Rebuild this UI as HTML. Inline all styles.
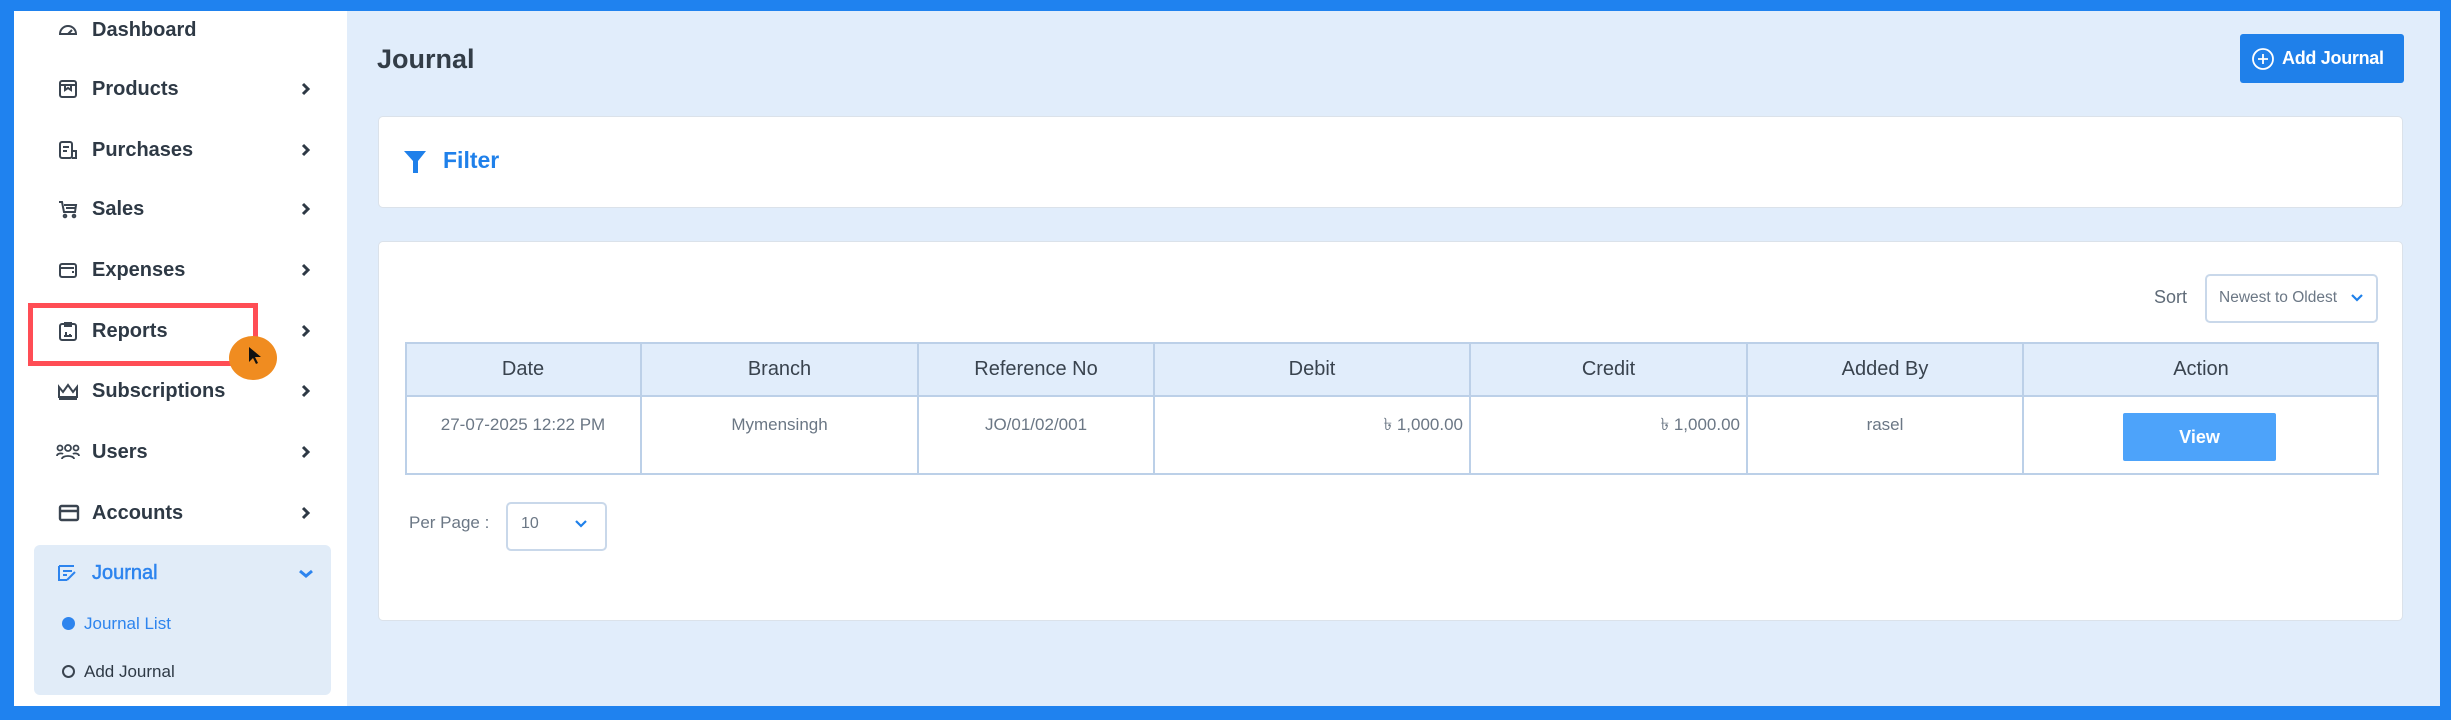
<!DOCTYPE html>
<html><head><meta charset="utf-8"><style>
*{margin:0;padding:0;box-sizing:border-box}
body{width:2451px;height:720px;background:#1f82ef;position:relative;overflow:hidden;font-family:"Liberation Sans",sans-serif}
.abs{position:absolute}
#side{left:14px;top:11px;width:333px;height:695px;background:#fff}
#main{left:347px;top:11px;width:2093px;height:695px;background:#e1edfb}
.item{position:absolute;left:92px;font-size:20px;font-weight:bold;color:#2e3945;line-height:24px}
.ic{position:absolute;left:58px;width:20px;height:20px}
.chev{position:absolute;left:300px;width:12px;height:14px}
.card{position:absolute;background:#fff;border:1px solid #dbe2ea;border-radius:5px}
.th{position:absolute;top:342px;height:55px;line-height:55px;text-align:center;font-size:20px;color:#39434e}
.td{position:absolute;top:413px;font-size:17px;color:#6b7785;line-height:24px}
.vl{position:absolute;top:342px;width:2px;height:133px;background:#bcd0e8}
</style></head><body>
<div id="side" class="abs"></div>
<div id="main" class="abs"></div>

<div class="abs" style="left:34px;top:545px;width:297px;height:150px;background:#e1ecf8;border-radius:6px"></div>

<svg class="ic" style="top:20px" viewBox="0 0 20 20" fill="none" stroke="#3a4450" stroke-width="2"><path d="M2 14a8 8 0 0 1 16 0z"/><path d="M10 14l4-4"/></svg>
<svg class="ic" style="top:79px" viewBox="0 0 20 20" fill="none" stroke="#3a4450" stroke-width="2"><rect x="2" y="2" width="16" height="16" rx="2"/><path d="M2 6h16M7 6v5l3-2 3 2V6"/></svg>
<svg class="ic" style="top:140px" viewBox="0 0 20 20" fill="none" stroke="#3a4450" stroke-width="2"><rect x="2" y="2" width="12" height="16" rx="2"/><path d="M5 7h6M5 11h4M14 11h4v7h-4"/></svg>
<svg class="ic" style="top:199px" viewBox="0 0 20 20" fill="none" stroke="#3a4450" stroke-width="2"><path d="M1 3h3l2 10h11l1-7H6M8 9h9"/><circle cx="7" cy="17" r="1.3"/><circle cx="16" cy="17" r="1.3"/></svg>
<svg class="ic" style="top:260px" viewBox="0 0 20 20" fill="none" stroke="#3a4450" stroke-width="2"><rect x="2" y="4" width="16" height="13" rx="2"/><path d="M2 8h14M14 12h2"/></svg>
<svg class="ic" style="top:321px" viewBox="0 0 20 20" fill="none" stroke="#3a4450" stroke-width="2"><rect x="2" y="3" width="16" height="16" rx="2"/><path d="M7 2h6v3H7zM6 15h8M8 15v-4M12 15v-2"/></svg>
<svg class="ic" style="top:381px" viewBox="0 0 20 20" fill="none" stroke="#3a4450" stroke-width="2"><path d="M1 6l4 5 5-7 5 7 4-5v10H1zM1 18h18"/></svg>
<svg class="ic" style="top:442px;width:24px;left:56px" viewBox="0 0 24 20" fill="none" stroke="#3a4450" stroke-width="1.8"><circle cx="12" cy="6" r="3"/><circle cx="4" cy="6" r="2.5"/><circle cx="20" cy="6" r="2.5"/><path d="M6 17c0-4 12-4 12 0M1 14c0-3 5-3 6-2M23 14c0-3-5-3-6-2"/></svg>
<svg class="ic" style="top:503px;width:22px" viewBox="0 0 22 20" fill="none" stroke="#3a4450" stroke-width="2.4"><rect x="2" y="3" width="18" height="14" rx="1.5"/><path d="M2 8h18"/></svg>
<svg class="ic" style="top:563px;width:22px;left:56px" viewBox="0 0 22 20" fill="none" stroke="#2d84ee" stroke-width="2"><path d="M3 3h15M3 3v14h8M7 8h9M7 12h4M11 17l8-8"/></svg>

<div class="item" style="top:18px">Dashboard</div>
<div class="item" style="top:77px">Products</div>
<div class="item" style="top:138px">Purchases</div>
<div class="item" style="top:197px">Sales</div>
<div class="item" style="top:258px">Expenses</div>
<div class="item" style="top:319px">Reports</div>
<div class="item" style="top:379px">Subscriptions</div>
<div class="item" style="top:440px">Users</div>
<div class="item" style="top:501px">Accounts</div>
<div class="item" style="top:561px;color:#2d84ee;font-weight:normal;-webkit-text-stroke:0.5px #2d84ee">Journal</div>
<div class="abs" style="left:62px;top:617px;width:13px;height:13px;border-radius:50%;background:#2d84ee"></div>
<div class="abs" style="left:84px;top:613px;font-size:17px;color:#2d84ee;line-height:22px">Journal List</div>
<div class="abs" style="left:62px;top:665px;width:13px;height:13px;border-radius:50%;border:2px solid #3a4450"></div>
<div class="abs" style="left:84px;top:661px;font-size:17px;color:#2e3945;line-height:22px">Add Journal</div>

<svg class="chev" style="top:82px" viewBox="0 0 12 14" fill="none" stroke="#2e3945" stroke-width="3"><path d="M3 2l5 5-5 5"/></svg>
<svg class="chev" style="top:143px" viewBox="0 0 12 14" fill="none" stroke="#2e3945" stroke-width="3"><path d="M3 2l5 5-5 5"/></svg>
<svg class="chev" style="top:202px" viewBox="0 0 12 14" fill="none" stroke="#2e3945" stroke-width="3"><path d="M3 2l5 5-5 5"/></svg>
<svg class="chev" style="top:263px" viewBox="0 0 12 14" fill="none" stroke="#2e3945" stroke-width="3"><path d="M3 2l5 5-5 5"/></svg>
<svg class="chev" style="top:324px" viewBox="0 0 12 14" fill="none" stroke="#2e3945" stroke-width="3"><path d="M3 2l5 5-5 5"/></svg>
<svg class="chev" style="top:384px" viewBox="0 0 12 14" fill="none" stroke="#2e3945" stroke-width="3"><path d="M3 2l5 5-5 5"/></svg>
<svg class="chev" style="top:445px" viewBox="0 0 12 14" fill="none" stroke="#2e3945" stroke-width="3"><path d="M3 2l5 5-5 5"/></svg>
<svg class="chev" style="top:506px" viewBox="0 0 12 14" fill="none" stroke="#2e3945" stroke-width="3"><path d="M3 2l5 5-5 5"/></svg>
<svg class="abs" style="left:298px;top:568px;width:16px;height:12px" viewBox="0 0 16 12" fill="none" stroke="#2d84ee" stroke-width="3"><path d="M2 3l6 5 6-5"/></svg>

<div class="abs" style="left:28px;top:303px;width:230px;height:63px;border:5px solid #ff4d55"></div>
<div class="abs" style="left:229px;top:336px;width:48px;height:44px;border-radius:50%;background:#f08c20"></div>
<svg class="abs" style="left:247px;top:346px;width:16px;height:20px" viewBox="0 0 16 20"><path d="M2 1v15l4-4 3 6 2-1-3-6h6z" fill="#111"/></svg>

<div class="abs" style="left:377px;top:44px;font-size:27px;font-weight:bold;color:#333d47">Journal</div>
<div class="abs" style="left:2240px;top:34px;width:164px;height:49px;background:#1f80ea;border-radius:3px;color:#fff;font-size:18px;font-weight:bold;line-height:49px;padding-left:42px;white-space:nowrap;letter-spacing:-0.3px">Add Journal</div>
<svg class="abs" style="left:2251px;top:47px;width:24px;height:24px" viewBox="0 0 24 24" fill="none" stroke="#fff" stroke-width="1.8"><circle cx="12" cy="12" r="10"/><path d="M12 7v10M7 12h10"/></svg>

<div class="card" style="left:378px;top:116px;width:2025px;height:92px"></div>
<svg class="abs" style="left:403px;top:150px;width:24px;height:24px" viewBox="0 0 24 24"><path d="M1 1h22l-8 10v12h-5V11z" fill="#1f80ea"/></svg>
<div class="abs" style="left:443px;top:147px;font-size:23px;font-weight:bold;color:#1f80ea">Filter</div>

<div class="card" style="left:378px;top:241px;width:2025px;height:380px"></div>
<div class="abs" style="left:2154px;top:287px;font-size:18px;color:#5f6b78">Sort</div>
<div class="abs" style="left:2205px;top:274px;width:173px;height:49px;border:2px solid #c9d8ea;border-radius:5px;background:#fff"></div>
<div class="abs" style="left:2219px;top:289px;font-size:15.5px;color:#6b7785">Newest to Oldest</div>
<svg class="abs" style="left:2350px;top:293px;width:14px;height:10px" viewBox="0 0 14 10" fill="none" stroke="#1f80ea" stroke-width="2.2"><path d="M2 2l5 5 5-5"/></svg>

<div class="abs" style="left:405px;top:342px;width:1974px;height:133px;border:2px solid #bcd0e8;background:#fff"></div>
<div class="abs" style="left:407px;top:344px;width:1970px;height:53px;background:#e1edfb;border-bottom:2px solid #bcd0e8"></div>
<div class="vl" style="left:640px"></div>
<div class="vl" style="left:917px"></div>
<div class="vl" style="left:1153px"></div>
<div class="vl" style="left:1469px"></div>
<div class="vl" style="left:1746px"></div>
<div class="vl" style="left:2022px"></div>

<div class="th" style="left:405px;width:236px">Date</div>
<div class="th" style="left:641px;width:277px">Branch</div>
<div class="th" style="left:918px;width:236px">Reference No</div>
<div class="th" style="left:1154px;width:316px">Debit</div>
<div class="th" style="left:1470px;width:277px">Credit</div>
<div class="th" style="left:1747px;width:276px">Added By</div>
<div class="th" style="left:2023px;width:356px">Action</div>

<div class="td" style="left:405px;width:236px;text-align:center">27-07-2025 12:22 PM</div>
<div class="td" style="left:641px;width:277px;text-align:center">Mymensingh</div>
<div class="td" style="left:918px;width:236px;text-align:center">JO/01/02/001</div>
<div class="td" style="left:1154px;width:309px;text-align:right">৳ 1,000.00</div>
<div class="td" style="left:1470px;width:270px;text-align:right">৳ 1,000.00</div>
<div class="td" style="left:1747px;width:276px;text-align:center">rasel</div>
<div class="abs" style="left:2123px;top:413px;width:153px;height:48px;background:#4da3fa;border-radius:2px;color:#fff;font-size:18px;font-weight:bold;text-align:center;line-height:48px">View</div>

<div class="abs" style="left:409px;top:513px;font-size:17px;color:#6b7785">Per Page :</div>
<div class="abs" style="left:506px;top:502px;width:101px;height:49px;border:2px solid #c9d8ea;border-radius:5px;background:#fff"></div>
<div class="abs" style="left:521px;top:515px;font-size:16px;color:#6b7785">10</div>
<svg class="abs" style="left:574px;top:519px;width:14px;height:10px" viewBox="0 0 14 10" fill="none" stroke="#1f80ea" stroke-width="2.2"><path d="M2 2l5 5 5-5"/></svg>
</body></html>
